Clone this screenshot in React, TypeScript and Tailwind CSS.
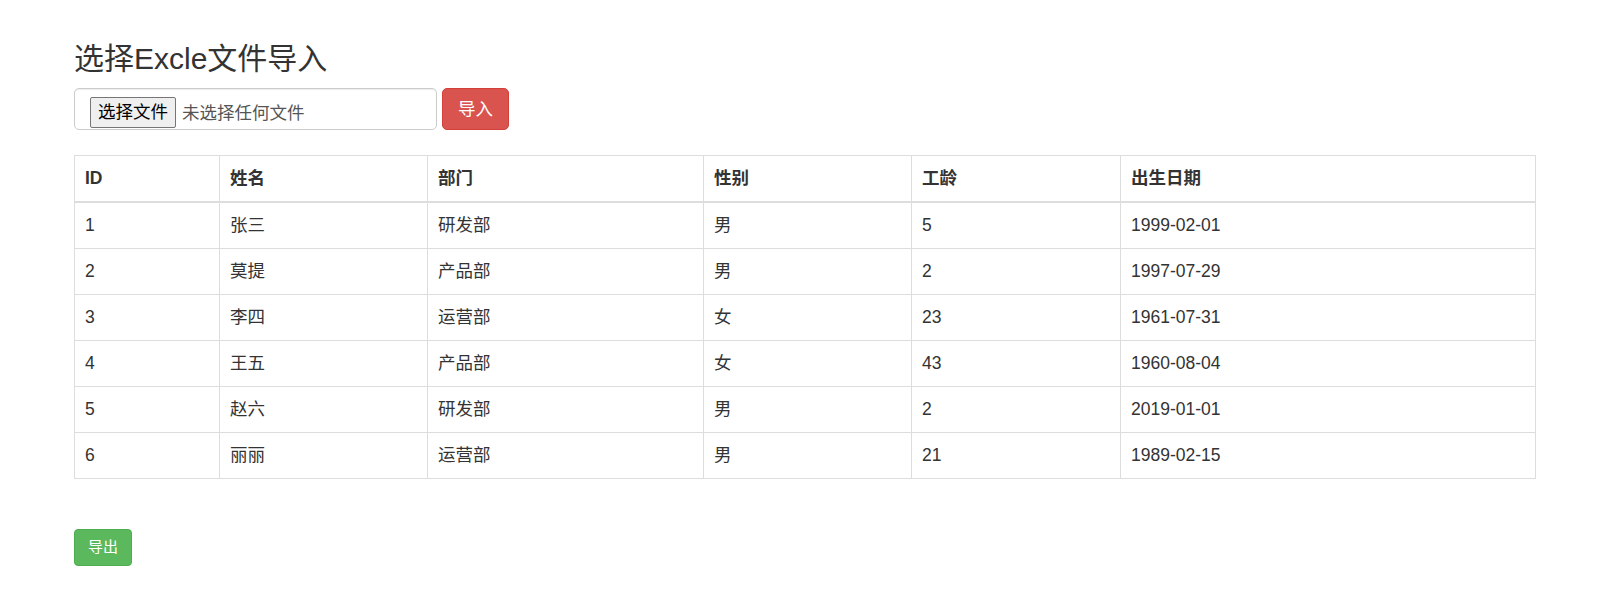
const rows = [
  { id: 1, name: '张三', dept: '研发部', sex: '男', years: 5, birth: '1999-02-01' },
  { id: 2, name: '莫提', dept: '产品部', sex: '男', years: 2, birth: '1997-07-29' },
  { id: 3, name: '李四', dept: '运营部', sex: '女', years: 23, birth: '1961-07-31' },
  { id: 4, name: '王五', dept: '产品部', sex: '女', years: 43, birth: '1960-08-04' },
  { id: 5, name: '赵六', dept: '研发部', sex: '男', years: 2, birth: '2019-01-01' },
  { id: 6, name: '丽丽', dept: '运营部', sex: '男', years: 21, birth: '1989-02-15' },
]

const headers = ['ID', '姓名', '部门', '性别', '工龄', '出生日期']
const widths = ['w-[145px]', 'w-[208px]', 'w-[276px]', 'w-[208px]', 'w-[209px]', 'w-[415px]']

export default function App() {
  return (
    <div
      className="min-h-[614px] bg-white px-[74px] pt-[42px] text-[#333]"
      style={{ fontFamily: '"Liberation Sans", "Noto Sans CJK SC", sans-serif' }}
    >
      {/* 标题 */}
      <h3 className="text-[30px] leading-[33px] font-normal mb-[13px]">选择Excle文件导入</h3>

      {/* 上传 */}
      <div className="flex items-center gap-[5px] mb-[25px]">
        <div className="flex items-start w-[363px] h-[42px] border border-[#ccc] rounded-[5px] pl-[15px] pt-[8px] shadow-[inset_0_1px_1px_rgba(0,0,0,0.075)]">
          <span className="h-[31px] px-[7px] flex items-center border border-[#767676] rounded-[2px] bg-[#efefef] text-black text-[17.5px]">
            选择文件
          </span>
          <span className="ml-[6px] h-[31px] flex items-center pt-[2px] text-[#555] text-[17.5px]">未选择任何文件</span>
        </div>
        <button className="h-[42px] px-[15px] rounded-[5px] border border-[#d43f3a] bg-[#d9534f] text-white text-[17.5px]">
          导入
        </button>
      </div>

      {/* 表格 */}
      <table className="w-[1461px] table-fixed border-collapse border border-[#ddd] text-[17.5px] leading-[25px]">
        <thead>
          <tr>
            {headers.map((h, i) => (
              <th
                key={h}
                className={`${widths[i]} border border-b-2 border-[#ddd] px-[10px] py-[10px] text-left font-bold`}
              >
                {h}
              </th>
            ))}
          </tr>
        </thead>
        <tbody>
          {rows.map((r) => (
            <tr key={r.id}>
              <td className="border border-[#ddd] px-[10px] py-[10px]">{r.id}</td>
              <td className="border border-[#ddd] px-[10px] py-[10px]">{r.name}</td>
              <td className="border border-[#ddd] px-[10px] py-[10px]">{r.dept}</td>
              <td className="border border-[#ddd] px-[10px] py-[10px]">{r.sex}</td>
              <td className="border border-[#ddd] px-[10px] py-[10px]">{r.years}</td>
              <td className="border border-[#ddd] px-[10px] py-[10px]">{r.birth}</td>
            </tr>
          ))}
        </tbody>
      </table>

      {/* 导出 */}
      <button className="mt-[50px] h-[37px] px-[13px] rounded-[4px] border border-[#4cae4c] bg-[#5cb85c] text-white text-[15px]">
        导出
      </button>
    </div>
  )
}
